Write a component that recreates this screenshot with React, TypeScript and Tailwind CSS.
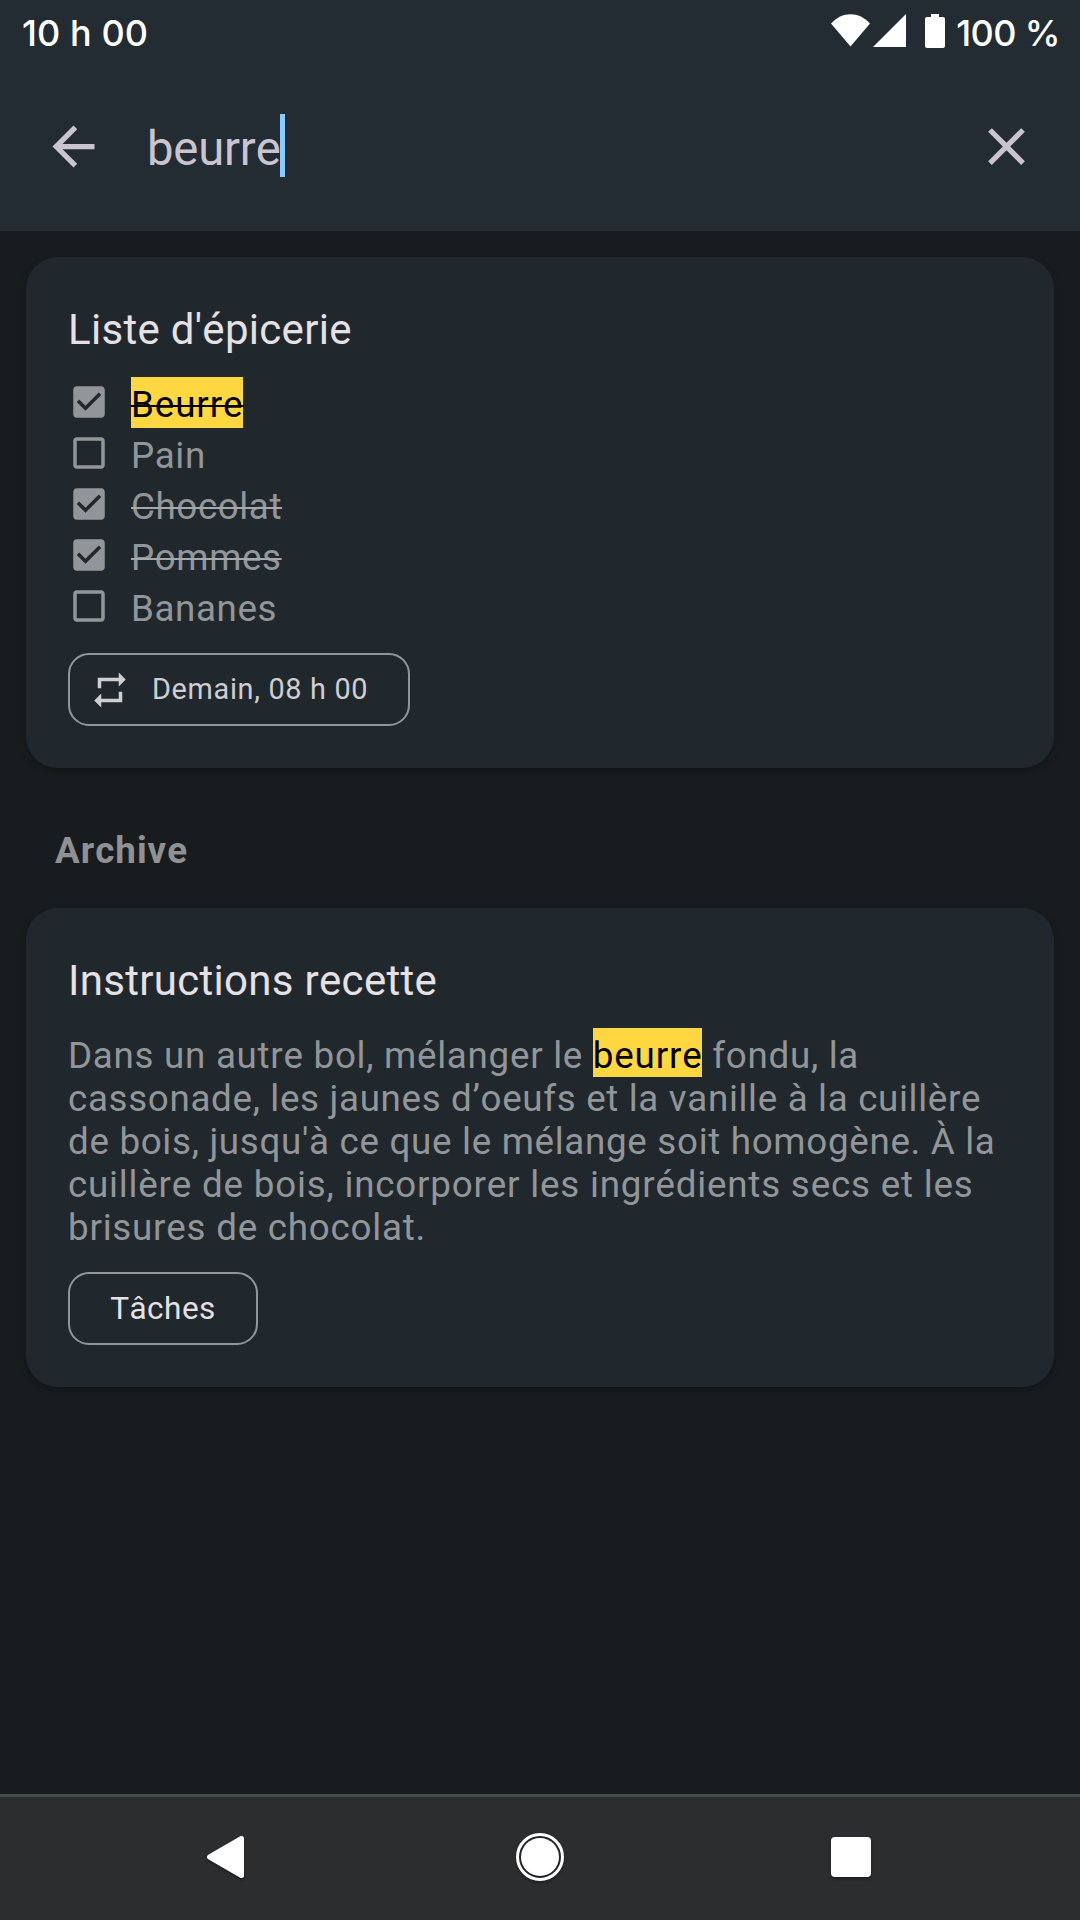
import type { ReactNode } from "react";

function CheckIcon({ checked }: { checked: boolean }) {
  return (
    <svg viewBox="0 0 24 24" className="mt-[4px] size-[42px] shrink-0 fill-[#929699]">
      {checked ? (
        <path d="M19 3H5c-1.11 0-2 .9-2 2v14c0 1.1.89 2 2 2h14c1.11 0 2-.9 2-2V5c0-1.1-.89-2-2-2zm-9 14l-5-5 1.41-1.41L10 14.17l7.59-7.59L19 8l-9 9z" />
      ) : (
        <path d="M19 5v14H5V5h14m0-2H5c-1.1 0-2 .9-2 2v14c0 1.1.9 2 2 2h14c1.1 0 2-.9 2-2V5c0-1.1-.9-2-2-2z" />
      )}
    </svg>
  );
}

const items = [
  { text: "Beurre", checked: true, match: true },
  { text: "Pain", checked: false, match: false },
  { text: "Chocolat", checked: true, match: false },
  { text: "Pommes", checked: true, match: false },
  { text: "Bananes", checked: false, match: false },
];

function Card({ title, children }: { title: string; children: ReactNode }) {
  return (
    <section className="mx-[26px] rounded-[32px] bg-[#21282d] px-[42px] pt-[48px] pb-[42px] shadow-[0_3px_7px_rgba(0,0,0,0.28)]">
      <h2 className="text-[42px] leading-[49px] tracking-[0.3px] whitespace-nowrap text-[#e6e1e5]">{title}</h2>
      {children}
    </section>
  );
}

export default function App() {
  return (
    <div className="flex h-[1920px] w-[1080px] flex-col overflow-hidden bg-[#191c1e] font-[Roboto,sans-serif] [font-kerning:none]">
      <header className="h-[231px] bg-[#242c33]">
        <div className="flex h-[66px] items-start justify-between pr-[20px] pl-[22px] font-['Inter',sans-serif] text-[36px] leading-[66px] font-medium text-white">
          <span className="tracking-[0.1px]">10 h 00</span>
          <div className="flex">
            <svg viewBox="0 0 116 36" className="mt-[13px] mr-[9px] h-[36px] w-[116px] fill-white">
              <path d="M0 10.5C11-2 28-2 39 10.5L19.500 33.500z" />
              <path d="M75 1v33H42z" />
              <path d="M100 1h8v3h4a2 2 0 0 1 2 2v27a2 2 0 0 1-2 2H96a2 2 0 0 1-2-2V6a2 2 0 0 1 2-2h4z" />
            </svg>
            <span className="tracking-[-0.6px]">100 %</span>
          </div>
        </div>
        <div className="flex h-[160px] items-center pr-[42px] pl-[42px]">
          <svg viewBox="0 0 24 24" className="size-[63px] fill-[#cac4d0]">
            <path d="M20 11H7.830l5.590-5.590L12 4l-8 8 8 8 1.410-1.410L7.830 13H20v-2z" />
          </svg>
          <div className="ml-[42px] flex flex-1 items-center pb-[2px]">
            <span className="w-[133px] pt-[7px] text-[47.250px] leading-[60px] tracking-[-0.2px] text-[#cac4d0]">beurre</span>
            <span className="h-[63px] w-[5px] bg-[#87ceff]" />
          </div>
          <svg viewBox="0 0 24 24" className="size-[63px] fill-[#cac4d0]">
            <path d="M19 6.410L17.590 5 12 10.590 6.410 5 5 6.410 10.590 12 5 17.590 6.410 19 12 13.410 17.590 19 19 17.590 13.410 12z" />
          </svg>
        </div>
      </header>

      <main className="flex-1 pt-[26px]">
        <Card title="Liste d'épicerie">
          <ul className="mt-[23px]">
            {items.map((item) => (
              <li key={item.text} className="flex h-[51px]">
                <CheckIcon checked={item.checked} />
                <span
                  className={
                    "ml-[21px] h-[51px] pt-[4px] text-[36.750px] leading-[48px] " +
                    (item.match
                      ? "bg-[#ffd740] tracking-[0.9px] text-black decoration-black "
                      : "tracking-[0.6px] text-[#929699] decoration-[#a6a8ab] ") +
                    (item.checked ? "line-through decoration-[2px]" : "")
                  }
                >
                  {item.text}
                </span>
              </li>
            ))}
          </ul>
          <div className="mt-[21px] flex h-[73px] w-[342px] items-center rounded-[21px] border-2 border-[#929699] pl-[19px]">
            <svg viewBox="0 0 24 24" className="size-[42px] fill-[#cfced2]">
              <path d="M7 7h10v3l4-4-4-4v3H5v6h2V7zm10 10H7v-3l-4 4 4 4v-3h12v-6h-2v4z" />
            </svg>
            <span className="mb-[2px] ml-[21px] text-[28.875px] leading-[34px] tracking-[0.67px] whitespace-nowrap text-[#cfced2]">
              Demain, 08 h 00
            </span>
          </div>
        </Card>

        <h3 className="mt-[61px] ml-[55px] text-[36.750px] leading-[43px] font-bold tracking-[1px] text-[#8f9192]">Archive</h3>

        <div className="mt-[36px]">
          <Card title="Instructions recette">
            <p className="mt-[29px] text-[36.750px] leading-[43px] whitespace-nowrap text-[#929699]">
              <span className="block tracking-[0.72px]">
                Dans un autre bol, mélanger le{" "}
                <mark className="bg-[#ffd740] pt-[6px] tracking-[0.8px] text-black">beurre</mark> fondu, la
              </span>
              <span className="block tracking-[0.67px]">cassonade, les jaunes d’oeufs et la vanille à la cuillère</span>
              <span className="block tracking-[0.69px]">de bois, jusqu'à ce que le mélange soit homogène. À la</span>
              <span className="block tracking-[0.8px]">cuillère de bois, incorporer les ingrédients secs et les</span>
              <span className="block tracking-[0.77px]">brisures de chocolat.</span>
            </p>
            <div className="mt-[23px] flex h-[73px] w-[190px] items-center justify-center rounded-[21px] border-2 border-[#929699] text-[31.500px] leading-[37px] tracking-[0.5px] text-[#e6e1e5]">
              Tâches
            </div>
          </Card>
        </div>
      </main>

      <nav className="flex h-[126px] items-center border-t-[3px] border-[#484a4b] bg-[#2c2d2f]">
        <svg viewBox="0 0 60 60" className="mb-[3px] ml-[195px] size-[60px] fill-white stroke-white drop-shadow-[0_2px_1px_rgba(0,0,0,0.3)]">
          <path d="M14.500 30L46.500 11.500V48.500z" strokeWidth="5" strokeLinejoin="round" />
        </svg>
        <svg viewBox="0 0 60 60" className="mb-[3px] ml-[255px] size-[60px] drop-shadow-[0_2px_1px_rgba(0,0,0,0.3)]">
          <circle cx="30" cy="30" r="22.500" fill="none" stroke="white" strokeWidth="3" />
          <circle cx="30" cy="30" r="19" fill="white" />
        </svg>
        <div className="mb-[3px] ml-[261px] size-[40px] rounded-[4px] bg-white shadow-[0_2px_3px_rgba(0,0,0,0.35)]" />
      </nav>
    </div>
  );
}
